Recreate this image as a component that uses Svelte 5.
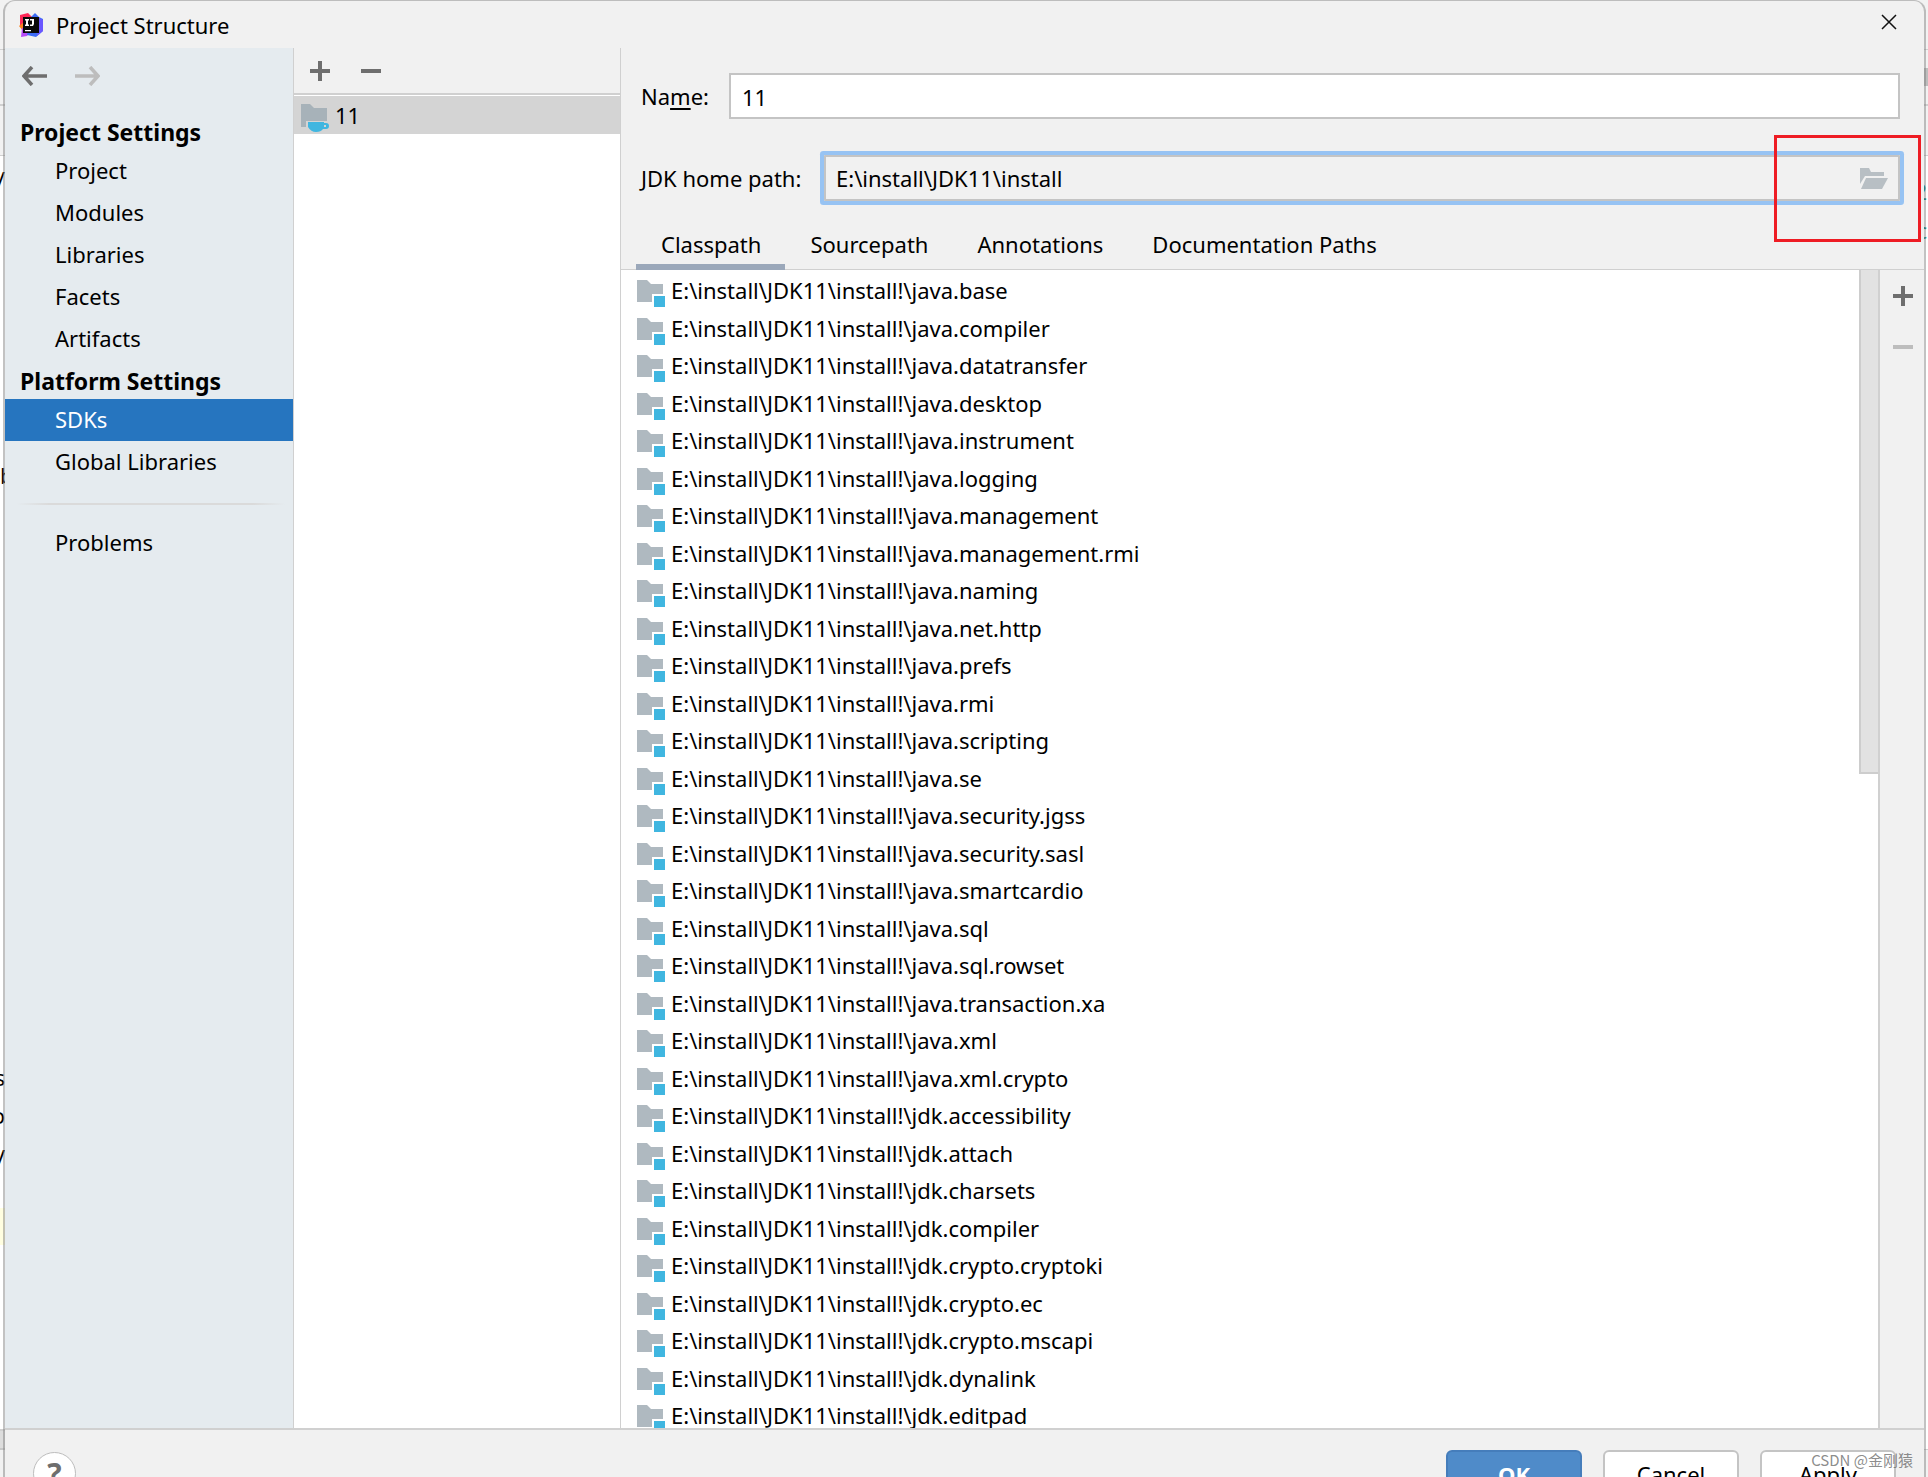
<script lang="ts">
  const sections = [
    { title: 'Project Settings', items: ['Project', 'Modules', 'Libraries', 'Facets', 'Artifacts'] },
    { title: 'Platform Settings', items: ['SDKs', 'Global Libraries'] },
  ];
  const tabs = ['Classpath', 'Sourcepath', 'Annotations', 'Documentation Paths'];
  const modules = [
    'java.base',
    'java.compiler',
    'java.datatransfer',
    'java.desktop',
    'java.instrument',
    'java.logging',
    'java.management',
    'java.management.rmi',
    'java.naming',
    'java.net.http',
    'java.prefs',
    'java.rmi',
    'java.scripting',
    'java.se',
    'java.security.jgss',
    'java.security.sasl',
    'java.smartcardio',
    'java.sql',
    'java.sql.rowset',
    'java.transaction.xa',
    'java.xml',
    'java.xml.crypto',
    'jdk.accessibility',
    'jdk.attach',
    'jdk.charsets',
    'jdk.compiler',
    'jdk.crypto.cryptoki',
    'jdk.crypto.ec',
    'jdk.crypto.mscapi',
    'jdk.dynalink',
    'jdk.editpad',
  ];

  let page = $state('SDKs');
  let tab = $state('Classpath');
  let name = $state('11');
  let homePath = $state('E:\\install\\JDK11\\install');
</script>

{#snippet plus()}
  <svg width="20" height="20" viewBox="0 0 20 20"><path d="M8 0h4v8h8v4h-8v8H8v-8H0V8h8z" fill="currentColor" /></svg>
{/snippet}

{#snippet minus()}
  <svg width="20" height="20" viewBox="0 0 20 20"><path d="M0 8h20v4H0z" fill="currentColor" /></svg>
{/snippet}

<div class="screen">
  <!-- slivers of the editor window behind the dialog -->
  <div class="behind behind-left" aria-hidden="true">
    <span style:top="164px">/</span>
    <span class="cut-right" style:top="460px">b</span>
    <span style:top="1062px">s</span>
    <span style:top="1100px">o</span>
    <span style:top="1138px">y</span>
  </div>
  <div class="behind behind-right" aria-hidden="true">
    <span style:top="176px">2</span>
    <span style:top="215px">c</span>
  </div>

  <div class="dialog" role="dialog" aria-label="Project Structure">
    <header class="titlebar">
      <svg width="24" height="24" viewBox="0 0 24 24">
        <path d="M1 2 9 0l5 5-6 9-7-1z" fill="#fe2857" />
        <path d="M0 13l5-4 4 7-5 2z" fill="#fc801d" />
        <path d="M2 24l1-9 10 2-5 6z" fill="#b74af7" />
        <path d="M12 4l4-4 4 4 4 2v12l-7 6-9-2z" fill="#3d6cf5" />
        <path d="M20 5l4 2v11l-6 5z" fill="#6b57ff" />
        <rect x="4" y="4" width="16" height="16" fill="#090909" />
        <path d="M6 6h4v1.500H9v4h1V13H6v-1.500h1v-4H6zM11 6h4v5l-1 2h-3v-1.500h2V7.500h-2zM6 17h6v1.300H6z" fill="#fff" />
      </svg>
      <h1>Project Structure</h1>
      <button type="button" class="icon-button close" aria-label="Close">
        <svg width="16" height="16" viewBox="0 0 16 16"><path d="M1 1l14 14M15 1 1 15" stroke="#111" stroke-width="1.500" /></svg>
      </button>
    </header>

    <div class="content">
      <nav class="sidebar">
        <div class="history">
          <button type="button" class="icon-button" aria-label="Back">
            <svg width="26" height="20" viewBox="0 0 26 20"><path d="M10 1 2 10l8 9M2 10h23" stroke="#6e6e6e" stroke-width="3.500" fill="none" /></svg>
          </button>
          <button type="button" class="icon-button" aria-label="Forward" disabled>
            <svg width="26" height="20" viewBox="0 0 26 20"><path d="M16 1l8 9-8 9M24 10H1" stroke="#bdbdbd" stroke-width="3.500" fill="none" /></svg>
          </button>
        </div>
        {#each sections as section (section.title)}
          <h2>{section.title}</h2>
          {#each section.items as item (item)}
            <button type="button" class="nav-item" class:selected={page === item} onclick={() => (page = item)}>{item}</button>
          {/each}
        {/each}
        <hr />
        <button type="button" class="nav-item" class:selected={page === 'Problems'} onclick={() => (page = 'Problems')}>Problems</button>
      </nav>

      <section class="sdk-list">
        <div class="toolbar">
          <button type="button" class="icon-button" aria-label="Add SDK">{@render plus()}</button>
          <button type="button" class="icon-button" aria-label="Remove SDK">{@render minus()}</button>
        </div>
        <button type="button" class="sdk">
          <svg width="28" height="28" viewBox="0 0 28 28">
            <path d="M0 0h9l4 4h13v13H5v6H0z" fill="#a7b2b9" />
            <path d="M7 18h16v1h2a3 3 0 0 1 0 6h-3q-2 3-7 3t-8-5z" fill="#40b6e0" />
            <path d="M23 21h2v2h-2z" fill="#d4d4d4" />
          </svg>
          <span>{name}</span>
        </button>
      </section>

      <main class="editor">
        <div class="form">
          <div class="field">
            <label class="name-label" for="sdk-name">Na<u>m</u>e:</label>
            <input id="sdk-name" class="name-input" type="text" bind:value={name} />
          </div>
          <div class="field">
            <label class="path-label" for="sdk-path">JDK home path:</label>
            <div class="path-box">
              <input id="sdk-path" type="text" bind:value={homePath} />
              <button type="button" class="icon-button" aria-label="Browse">
                <svg width="28" height="22" viewBox="0 0 28 22">
                  <path d="M0 0h9l2 4h13v4H5l-5 8z" fill="#b8bfc4" />
                  <path d="M6 10h22l-6 11H1z" fill="#b8bfc4" />
                </svg>
              </button>
              <div class="highlight"></div>
            </div>
          </div>
        </div>

        <div class="tabs" role="tablist">
          {#each tabs as label (label)}
            <button type="button" role="tab" aria-selected={tab === label} onclick={() => (tab = label)}>{label}</button>
          {/each}
        </div>

        <div class="classpath">
          <ul>
            {#each modules as module (module)}
              <li>
                <svg width="28" height="28" viewBox="0 0 28 28">
                  <path d="M0 1h10l4 4h12v10H15v8H0z" fill="#afb9c0" />
                  <path d="M17 17h11v11H17z" fill="#40b6e0" />
                </svg>
                <span>E:\install\JDK11\install!\{module}</span>
              </li>
            {/each}
          </ul>
          <div class="scrollbar"><div class="thumb"></div></div>
          <div class="side-tools">
            <button type="button" class="icon-button" aria-label="Add path">{@render plus()}</button>
            <button type="button" class="icon-button" aria-label="Remove path" disabled>{@render minus()}</button>
          </div>
        </div>
      </main>
    </div>

    <footer>
      <button type="button" class="help" aria-label="Help">?</button>
      <div class="actions">
        <button type="button" class="action primary">OK</button>
        <button type="button" class="action">Cancel</button>
        <button type="button" class="action">Apply</button>
      </div>
    </footer>
  </div>

  <div class="watermark">CSDN @金刚猿</div>
</div>

<style>
  .screen {
    position: relative;
    height: 100vh;
    padding: 0 2px 0 3px;
    box-sizing: border-box;
    overflow: hidden;
    background: #f2f2f2;
    color: #000;
    font: 22px/30px 'Noto Sans', 'Noto Sans CJK SC', sans-serif;
  }

  button,
  input {
    box-sizing: border-box;
    margin: 0;
    padding: 0;
    border: 0;
    background: none;
    color: inherit;
    font: inherit;
  }

  svg {
    display: block;
    flex: none;
  }

  .behind {
    position: absolute;
    top: 0;
    bottom: 0;
    overflow: hidden;
  }

  .behind span {
    position: absolute;
  }

  .behind-left {
    left: 0;
    width: 5px;
    background: linear-gradient(
      #f2f2f2 49px,
      #d0d0d0 49px 50px,
      #f2f2f2 50px 104px,
      #d0d0d0 104px 106px,
      #f2f2f2 106px 155px,
      #d0d0d0 155px 156px,
      #fff 156px 1208px,
      #fffee0 1208px 1245px,
      #fff 1245px 1429px,
      #d0d0d0 1429px 1431px,
      #ddd 1431px 1448px,
      #c8c8c8 1448px 1450px,
      #f2f2f2 1450px
    );
  }

  .behind-left span {
    right: 0;
  }

  .behind-left .cut-right {
    right: auto;
    left: 0;
  }

  .behind-right {
    right: 0;
    width: 4px;
    color: #00806a;
    background: linear-gradient(
      #f2f2f2 49px,
      #d0d0d0 49px 50px,
      #f2f2f2 50px 68px,
      #bdbdbd 68px 86px,
      #f2f2f2 86px 104px,
      #d0d0d0 104px 106px,
      #f2f2f2 106px 155px,
      #d0d0d0 155px 156px,
      #fff 156px 1449px,
      #d0d0d0 1449px 1450px,
      #f2f2f2 1450px
    );
  }

  .behind-right span {
    right: 1px;
  }

  .dialog {
    position: relative;
    display: flex;
    flex-direction: column;
    height: 100%;
    box-sizing: border-box;
    border: 2px solid rgba(120, 120, 120, 0.45);
    border-top: 1px solid #bdbdbd;
    border-bottom: 0;
    border-radius: 12px 12px 0 0;
    overflow: hidden;
    background: #f1f1f1;
    background-clip: padding-box;
  }

  .icon-button {
    display: flex;
    color: #6e6e6e;
  }

  .icon-button:disabled {
    color: #bdbdbd;
  }

  .titlebar {
    display: flex;
    align-items: center;
    flex: none;
    height: 47px;
    padding: 0 27px 0 14px;
  }

  h1 {
    flex: 1;
    margin: 0 0 0 13px;
    font: inherit;
  }

  .close {
    padding-bottom: 5px;
  }

  .content {
    display: grid;
    grid-template-columns: 289px 327px minmax(0, 1fr);
    flex: 1;
    min-height: 0;
    border-bottom: 2px solid #d0d0d0;
  }

  .sidebar {
    overflow: hidden;
    border-right: 1px solid #d0d0d0;
    background: #e5ebef;
  }

  .history {
    display: flex;
    gap: 26px;
    height: 45px;
    padding: 18px 17px 0;
  }

  h2 {
    height: 34px;
    margin: 0;
    padding: 5px 15px 0;
    font-size: 23px;
    font-weight: 700;
    line-height: 32px;
  }

  .nav-item {
    display: block;
    width: 100%;
    height: 42px;
    padding: 0 0 2px 50px;
    text-align: left;
  }

  .selected {
    background: #2675bf;
    color: #fff;
  }

  hr {
    height: 2px;
    margin: 20px 8px 17px 12px;
    border: 0;
    background: linear-gradient(90deg, transparent, #dadada 12%, #dadada 88%, transparent);
  }

  .sdk-list {
    border-right: 1px solid #d0d0d0;
    background: #fff;
  }

  .toolbar {
    display: flex;
    gap: 31px;
    height: 32px;
    padding: 13px 16px 0;
    border-bottom: 2px solid #d0d0d0;
    background: #f1f1f1;
  }

  .sdk {
    display: flex;
    align-items: center;
    gap: 6px;
    width: 100%;
    height: 38px;
    margin-top: 1px;
    padding-left: 7px;
    background: #d4d4d4;
  }

  .sdk svg {
    margin-top: 5px;
  }

  .editor {
    display: flex;
    flex-direction: column;
    min-height: 0;
  }

  .form {
    display: flex;
    flex-direction: column;
    gap: 36px;
    padding: 25px 24px 0 20px;
  }

  .field {
    display: flex;
    align-items: center;
  }

  u {
    text-underline-offset: 3px;
  }

  .name-label {
    width: 88px;
  }

  .path-label {
    width: 183px;
  }

  .name-input,
  .path-box {
    flex: 1;
    height: 46px;
    border: 2px solid #c4c4c4;
  }

  .name-input {
    padding: 1px 11px 0;
    background: #fff;
  }

  .path-box {
    position: relative;
    display: flex;
    align-items: center;
    box-sizing: border-box;
    padding: 0 10px 0 10px;
    border-radius: 1px;
    box-shadow: 0 0 0 4px #97c3f3;
  }

  .path-box input {
    flex: 1;
    min-width: 0;
  }

  .path-box svg {
    margin-top: 2px;
  }

  input:focus {
    outline: 0;
  }

  /* red marker over the browse button */
  .highlight {
    position: absolute;
    top: -22px;
    right: -23px;
    width: 141px;
    height: 101px;
    border: 3px solid #ee1c24;
    pointer-events: none;
  }

  .tabs {
    display: flex;
    height: 68px;
    padding-left: 15px;
    border-bottom: 1px solid #d0d0d0;
  }

  .tabs button {
    height: 69px;
    padding: 23px 24px 0 25px;
    border-bottom: 6px solid transparent;
  }

  .tabs button[aria-selected='true'] {
    border-bottom-color: #9ba8ba;
  }

  .classpath {
    display: flex;
    flex: 1;
    min-height: 0;
    background: #fff;
  }

  ul {
    flex: 1;
    min-width: 0;
    margin: 0;
    padding: 1px 0 0 16px;
    overflow: hidden;
    list-style: none;
  }

  li {
    display: flex;
    align-items: center;
    gap: 6px;
    height: 38px;
    white-space: nowrap;
  }

  li:nth-child(even) {
    height: 37px;
  }

  li svg {
    margin-top: 6px;
  }

  .scrollbar {
    width: 19px;
  }

  .thumb {
    height: 43.5%;
    box-sizing: border-box;
    border: 2px solid #cdcdcd;
    border-width: 0 0 2px 2px;
    background: #e2e2e2;
  }

  .side-tools {
    display: flex;
    flex-direction: column;
    align-items: flex-start;
    gap: 31px;
    width: 31px;
    padding: 16px 0 0 13px;
    border-left: 2px solid #d0d0d0;
    background: #f1f1f1;
  }

  footer {
    display: flex;
    justify-content: space-between;
    flex: none;
    height: 27px;
    padding: 20px 28px 0;
    overflow: hidden;
  }

  .help {
    width: 43px;
    height: 43px;
    margin-top: 2px;
    border: 1px solid #bdbdbd;
    border-radius: 50%;
    background: #fff;
    color: #6e6e6e;
    font-size: 30px;
    font-weight: 700;
  }

  .actions {
    display: flex;
    gap: 21px;
  }

  .action {
    width: 136px;
    height: 50px;
    padding-bottom: 2px;
    border: 2px solid #c4c4c4;
    border-radius: 6px;
    background: #fff;
  }

  .primary {
    border-color: #457dbb;
    background: #4f8bc9;
    color: #fff;
    font-weight: 700;
  }

  .watermark {
    position: absolute;
    right: 15px;
    bottom: 5px;
    color: rgba(110, 110, 110, 0.8);
    font: 15px/24px 'Noto Sans CJK SC', sans-serif;
  }
</style>
